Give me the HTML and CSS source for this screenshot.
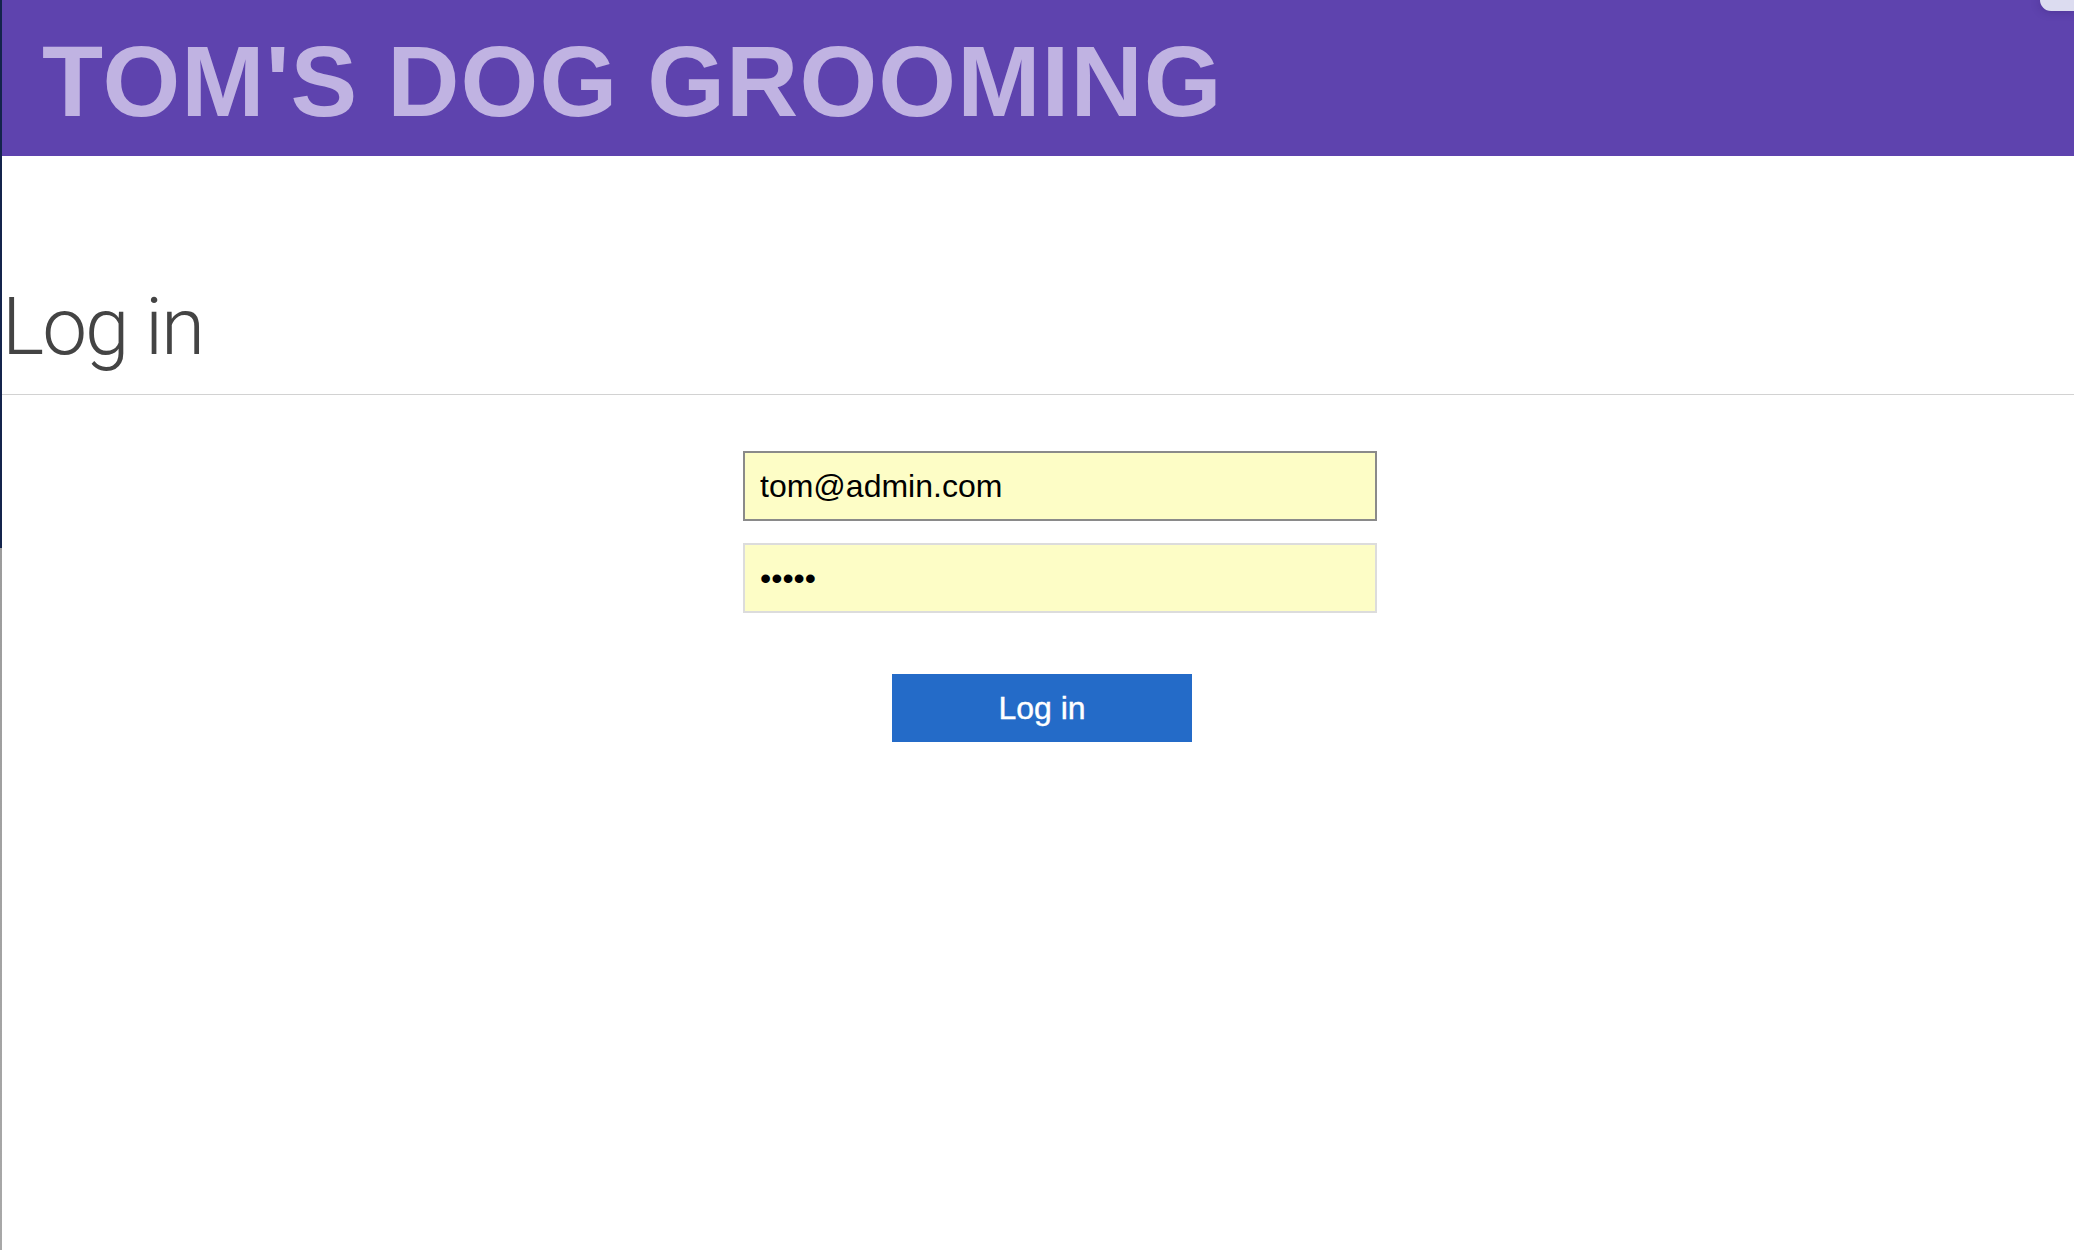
FILE: index.html
```html
<!DOCTYPE html>
<html lang="en">
<head>
<meta charset="utf-8">
<title>Tom's Dog Grooming - Log in</title>
<link rel="stylesheet" href="styles.css">
</head>
<body>
<div class="edge-strip"></div>
<div class="corner-tab"></div>
<div class="page">
  <header class="site-header">
    <h1 class="brand">TOM'S DOG GROOMING</h1>
  </header>
  <main class="content">
    <h2 class="page-title">Log in</h2>
    <hr class="divider">
    <form class="login-form" onsubmit="return false;">
      <div class="fields">
        <input class="field field-focus" type="email" value="tom@admin.com">
        <input class="field" type="password" value="abcde">
      </div>
      <div class="actions">
        <button class="btn-login" type="submit">Log in</button>
      </div>
    </form>
  </main>
</div>
</body>
</html>
```
FILE: styles.css
```css
html, body {
  margin: 0;
  padding: 0;
  background: #ffffff;
  height: 100%;
}
body {
  font-family: "Liberation Sans", Arial, sans-serif;
  position: relative;
  overflow: hidden;
}
.edge-strip {
  position: absolute;
  left: 0;
  top: 0;
  width: 2px;
  height: 1250px;
  background: linear-gradient(to bottom, #14244c 0, #14244c 548px, #9c9c9c 548px, #a8a8a8 100%);
}
.corner-tab {
  position: absolute;
  right: 0;
  top: 0;
  width: 34px;
  height: 11px;
  background: #dcdcf0;
  border-bottom-left-radius: 11px;
  box-shadow: 0 0 10px rgba(40, 20, 90, 0.35);
}
.page {
  margin-left: 2px;
}
.site-header {
  height: 156px;
  background: #5e43ae;
  display: flex;
  align-items: center;
}
.brand {
  margin: 0 0 0 40px;
  font-family: "Liberation Sans", Arial, sans-serif;
  font-weight: 700;
  font-size: 100px;
  line-height: 1;
  color: #c0b3e2;
  letter-spacing: 1.1px;
  position: relative;
  top: 3px;
}
.content {
  display: flex;
  flex-direction: column;
}
.page-title {
  margin: 131px 0 0 0;
  font-family: Roboto, "Open Sans", sans-serif;
  font-weight: 300;
  font-size: 80px;
  line-height: 80px;
  color: #444444;
  letter-spacing: -2px;
}
.divider {
  margin: 27px 0 0 0;
  border: 0;
  border-top: 1px solid #d2d2d2;
  height: 0;
}
.login-form {
  display: flex;
  flex-direction: column;
  margin-top: 56px;
}
.fields {
  display: flex;
  flex-direction: column;
  align-items: center;
  gap: 22px;
  padding-left: 44px;
}
.field {
  box-sizing: border-box;
  width: 634px;
  height: 70px;
  margin: 0;
  padding: 0 15px;
  border: 2px solid #dcdcdc;
  background: #fdfdc6;
  font-family: "Liberation Sans", Arial, sans-serif;
  font-size: 32px;
  color: #000000;
  outline: none;
  border-radius: 0;
}
.field-focus {
  border-color: #8a8a8a;
}
.actions {
  display: flex;
  justify-content: center;
  padding-left: 8px;
  margin-top: 61px;
}
.btn-login {
  width: 300px;
  height: 68px;
  border: 0;
  border-radius: 0;
  background: #246bc8;
  color: #ffffff;
  font-family: "Liberation Sans", Arial, sans-serif;
  font-weight: 400;
  font-size: 32px;
  padding: 0;
  cursor: pointer;
  -webkit-text-stroke: 0.4px #ffffff;
}
```
